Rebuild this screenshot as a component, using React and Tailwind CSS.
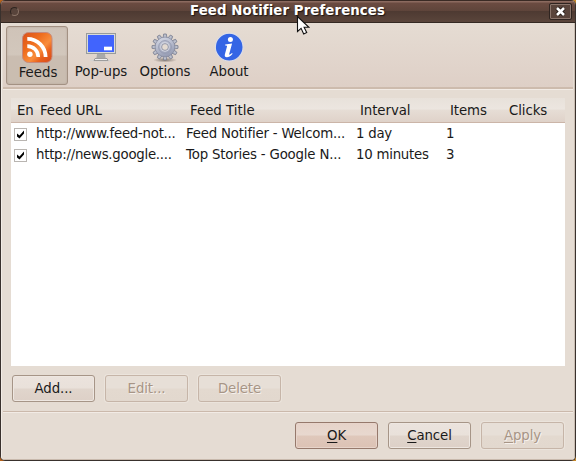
import React from "react";

function FeedIcon() {
  return (
    <svg width="32" height="32" viewBox="0 0 32 32">
      <defs>
        <linearGradient id="rss" x1="0" y1="0" x2="1" y2="1">
          <stop offset="0" stopColor="#d9501b" />
          <stop offset="0.35" stopColor="#ee6d1e" />
          <stop offset="0.6" stopColor="#f98d3c" />
          <stop offset="0.75" stopColor="#e9611d" />
          <stop offset="1" stopColor="#d5481a" />
        </linearGradient>
      </defs>
      <rect x="0.500" y="0.500" width="29.500" height="30" rx="6" fill="url(#rss)" stroke="#c58a7d" />
      <circle cx="7.900" cy="22.300" r="2.700" fill="#fff" />
      <path d="M5.300 14.100a11 11 0 0 1 11 11" fill="none" stroke="#fff" strokeWidth="3.600" />
      <path d="M5.300 6.800a18.300 18.300 0 0 1 18.300 18.300" fill="none" stroke="#fff" strokeWidth="3.800" />
    </svg>
  );
}

function MonitorIcon() {
  return (
    <svg width="32" height="32" viewBox="0 0 32 32">
      <ellipse cx="16" cy="28.500" rx="11" ry="1" fill="#cfd3d6" opacity="0.7" />
      <path d="M12 22h8l.6 4h-9.200z" fill="#a9a9a9" />
      <path d="M10 26.500h12l1 2H9z" fill="#f1f1f1" stroke="#8c8c8c" strokeWidth="0.8" />
      <rect x="1.500" y="1.500" width="29" height="20" fill="#d9dad7" stroke="#989b9b" />
      <rect x="3" y="3" width="26" height="17" fill="#4164fd" />
      <rect x="19" y="15" width="8" height="3" fill="#fff" />
      <path d="M19 14.500h8M19 18.500h8" stroke="#a9b9ff" strokeWidth="0.6" />
    </svg>
  );
}

const TEETH = [0, 30, 60, 90, 120, 150, 180, 210, 240, 270, 300, 330];

function GearIcon() {
  return (
    <svg width="32" height="32" viewBox="0 0 32 32">
      <defs>
        <linearGradient id="gear" x1="0" y1="0" x2="0.4" y2="1">
          <stop offset="0" stopColor="#dadde8" />
          <stop offset="1" stopColor="#989eb5" />
        </linearGradient>
        <radialGradient id="gearShadow">
          <stop offset="0" stopColor="#6b625c" stopOpacity="0.8" />
          <stop offset="1" stopColor="#6b625c" stopOpacity="0" />
        </radialGradient>
      </defs>
      <ellipse cx="16" cy="28" rx="12" ry="2.500" fill="url(#gearShadow)" />
      {TEETH.map((a) => (
        <path key={a} d="M14 6l.7-4h2.600L18 6z" transform={`rotate(${a} 16 15)`} fill="#bcc0cd" stroke="#777c8d" strokeWidth="0.8" />
      ))}
      <circle cx="16" cy="15" r="9.900" fill="url(#gear)" stroke="#858a9d" strokeWidth="0.7" />
      <circle cx="16" cy="15" r="6.300" fill="none" stroke="#959bb2" strokeWidth="1" />
      <circle cx="16" cy="15" r="4.700" fill="#d3d6e1" />
      <circle cx="16" cy="15" r="3.400" fill="#e3dad1" stroke="#8b91a5" strokeWidth="0.9" />
    </svg>
  );
}

function InfoIcon() {
  return (
    <svg width="32" height="32" viewBox="0 0 32 32">
      <circle cx="16.200" cy="15.100" r="13.900" fill="#3465e5" stroke="#dcdde6" strokeWidth="1.200" />
      <circle cx="17.400" cy="7.500" r="2.500" fill="#fff" />
      <path d="M12.200 12.400l6.900-.9-2.900 10.400c-.3 1.100.5 1.200 2.800-.8l.6.7c-2.200 2.600-4 3.500-5.700 3.500-1.900 0-2.500-1.200-2-3l2.100-7.700c.2-.9-.3-1.200-1.900-1.200z" fill="#fff" />
    </svg>
  );
}

function ToolButton({ icon, label, active }) {
  return (
    <div
      className={
        "flex h-[59px] w-[62px] flex-col items-center rounded-[3px] border pt-[5px] " +
        (active
          ? "border-[#a39183] bg-[linear-gradient(#cfc3b8,#d2c7bc_48%,#cabdb1_52%,#cabdb0)] pl-[2px] shadow-[inset_0_0_2px_#b1a297]"
          : "border-transparent")
      }
    >
      {icon}
      <span className={"leading-4 " + (active ? "mt-px" : "tracking-[-0.08px]")}>{label}</span>
    </div>
  );
}

function Button({ children, kind = "normal" }) {
  const kinds = {
    normal:
      "border-[#a69587] bg-[linear-gradient(#ebe3dd,#e9e1da_48%,#e0d5cc_52%,#ddd0c7)] shadow-[inset_0_0_0_1px_#eee7e1]",
    primary:
      "border-[#96796c] bg-[linear-gradient(#e6d3c9,#e8d8cf_48%,#dfc8bb_52%,#dcc2b4)] shadow-[inset_0_0_0_1px_#e7d4ca]",
    disabled:
      "border-[#c6b5a8] bg-[linear-gradient(#e7dfd7,#e7dfd7_48%,#e3d9cf_52%,#e2d8ce)] text-[#a79586] [text-shadow:1px_1px_0_#f6f1ed] shadow-[0_0_0_1px_#ebe4dc]",
  };
  return (
    <button className={"flex h-[27px] w-[83px] items-center justify-center rounded-[3px] border pt-px " + kinds[kind]}>
      <span className="leading-4 tracking-[-0.1px]">{children}</span>
    </button>
  );
}

function Mnemonic({ children }) {
  return <span className="underline decoration-1 underline-offset-2">{children}</span>;
}

function CheckBox() {
  return (
    <span className="mt-px flex h-[13px] w-[13px] items-center justify-center border border-[#b9b5b1] bg-white">
      <svg width="9" height="9" viewBox="0 0 9 9">
        <path d="M1 3.500v3L3.500 8.500 8 3.500v-3L3.500 5.500z" fill="#000" />
      </svg>
    </span>
  );
}

const FEEDS = [
  { url: "http://www.feed-not...", title: "Feed Notifier - Welcom...", interval: "1 day", items: "1" },
  { url: "http://news.google....", title: "Top Stories - Google N...", interval: "10 minutes", items: "3" },
];

export default function App() {
  return (
    <div className="h-[461px] w-[576px] overflow-hidden bg-[linear-gradient(90deg,#b8621b,#c98b2c)] font-['DejaVu_Sans',sans-serif] text-[13.333px] text-[#1a1a1a]">
      <div className="relative flex h-full w-full flex-col overflow-hidden rounded-[5px] border-x border-b border-[#39312d] bg-[#e5dcd3]">
        <header className="flex h-[23px] shrink-0 items-center border-t border-b border-t-[#3a2a24] border-b-[#332822] bg-[linear-gradient(#8b6a5f_0,#8b6a5f_1px,#6b4b41_2px,#5f453b_45%,#4e3a32_50%,#5a453b_100%)] pr-[3px] pl-[9px]">
          <span className="h-[9px] w-[9px] shrink-0 rounded-full border border-[#2e2520] border-r-[#8b7468] border-b-[#8b7468] bg-[#58443b]" />
          <h1 className="flex-1 pb-[2px] pl-[7px] text-center leading-4 font-bold tracking-[0.08px] text-white [text-shadow:1px_1px_1px_#1e1512]">
            Feed Notifier Preferences
          </h1>
          <button className="flex h-[17px] w-[23px] shrink-0 items-center justify-center rounded-[2px] border border-[#2f2420] bg-[#59443b] shadow-[inset_0_0_0_1px_#8a756b]">
            <svg width="11" height="11" viewBox="0 0 11 11">
              <path d="M2 2l7 7M9 2L2 9" stroke="#1f1713" strokeWidth="4.400" />
              <path d="M2 2l7 7M9 2L2 9" stroke="#fff" strokeWidth="2.600" />
            </svg>
          </button>
        </header>

        <div className="flex min-h-0 flex-1 flex-col border-x border-b border-l-[#f2ece6] border-r-[#c9bdb2] border-b-[#c8b9ac]">
          <nav className="mr-px ml-px flex h-[67px] shrink-0 gap-[2px] border-b border-b-[#f2ebe5] bg-[linear-gradient(#e5dcd3,#decfc6)] pt-[3px] pl-[3px] shadow-[inset_0_-2px_0_#cdbbad]">
            <ToolButton icon={<FeedIcon />} label="Feeds" active />
            <ToolButton icon={<MonitorIcon />} label="Pop-ups" />
            <ToolButton icon={<GearIcon />} label="Options" />
            <ToolButton icon={<InfoIcon />} label="About" />
          </nav>

          <section className="mt-2 ml-[9px] h-[268px] w-[554px] shrink-0 bg-white">
            <div className="grid h-[25px] grid-cols-[23px_150px_170px_90px_59px_1fr] items-center border-b border-[#cbb5a8] bg-[linear-gradient(#e8e1da,#ece6e0_46%,#e6ddd5_50%,#dfd2c9)] pt-px pl-[6px] leading-4 tracking-[-0.08px]">
              <span>En</span>
              <span>Feed URL</span>
              <span className="tracking-normal">Feed Title</span>
              <span>Interval</span>
              <span>Items</span>
              <span>Clicks</span>
            </div>
            {FEEDS.map((f) => (
              <div key={f.url} className="grid h-[21px] grid-cols-[22px_150px_170px_90px_1fr] items-center pl-[3px] leading-4">
                <CheckBox />
                <span className="tracking-[-0.27px]">{f.url}</span>
                <span className="tracking-[-0.19px]">{f.title}</span>
                <span className="tracking-[-0.25px]">{f.interval}</span>
                <span>{f.items}</span>
              </div>
            ))}
          </section>

          <div className="mt-[9px] ml-[10px] flex shrink-0 gap-[10px]">
            <Button>Add...</Button>
            <Button kind="disabled">Edit...</Button>
            <Button kind="disabled">Delete</Button>
          </div>

          <div className="mx-px mt-[9px] h-[2px] shrink-0 border-t border-b border-t-[#cbb9ab] border-b-[#f2ebe5]" />

          <footer className="mt-[9px] mr-[10px] flex justify-end gap-[10px]">
            <Button kind="primary"><Mnemonic>O</Mnemonic>K</Button>
            <Button><Mnemonic>C</Mnemonic>ancel</Button>
            <Button kind="disabled"><Mnemonic>A</Mnemonic>pply</Button>
          </footer>
        </div>

        <svg className="absolute top-[15px] left-[295px]" width="14" height="21" viewBox="0 0 14 21">
          <path d="M1.500 1.500v15l3.600-3.200 2.600 5.700 3-1.400-2.600-5.300h4.800z" fill="#fff" stroke="#111" strokeWidth="1.100" />
        </svg>
      </div>
    </div>
  );
}
